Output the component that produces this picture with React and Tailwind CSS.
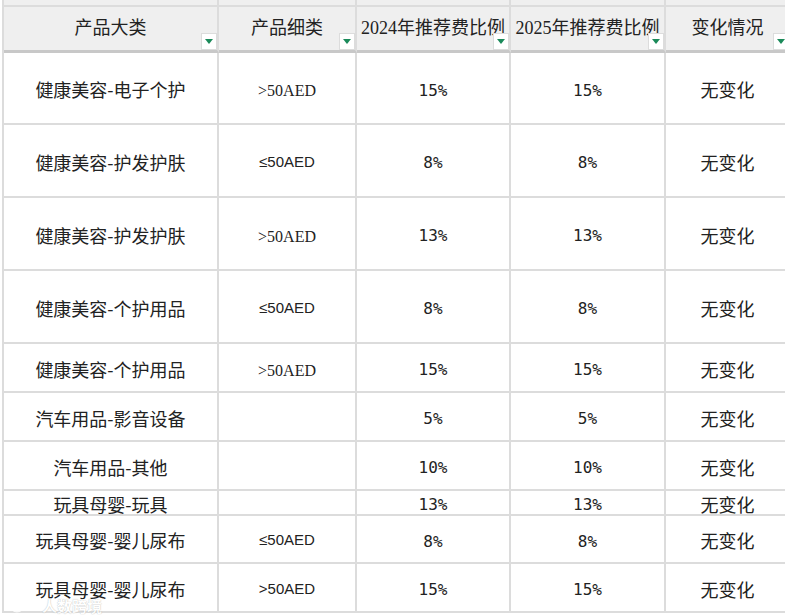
const rows = [
  { cat: "健康美容-电子个护", sub: ">50AED", subFont: "serif", r24: "15%", r25: "15%", h: "h-[72px]" },
  { cat: "健康美容-护发护肤", sub: "≤50AED", subFont: "sans", r24: "8%", r25: "8%", h: "h-[73px]" },
  { cat: "健康美容-护发护肤", sub: ">50AED", subFont: "serif", r24: "13%", r25: "13%", h: "h-[73px]" },
  { cat: "健康美容-个护用品", sub: "≤50AED", subFont: "sans", r24: "8%", r25: "8%", h: "h-[73px]" },
  { cat: "健康美容-个护用品", sub: ">50AED", subFont: "serif", r24: "15%", r25: "15%", h: "h-[49px]" },
  { cat: "汽车用品-影音设备", sub: "", r24: "5%", r25: "5%", h: "h-[49px]" },
  { cat: "汽车用品-其他", sub: "", r24: "10%", r25: "10%", h: "h-[49px]" },
  { cat: "玩具母婴-玩具", sub: "", r24: "13%", r25: "13%", h: "h-[25px]" },
  { cat: "玩具母婴-婴儿尿布", sub: "≤50AED", subFont: "sans", r24: "8%", r25: "8%", h: "h-[48px]" },
  { cat: "玩具母婴-婴儿尿布", sub: ">50AED", subFont: "sans", r24: "15%", r25: "15%", h: "h-[49px]" }
];

const headers = ["产品大类", "产品细类", "2024年推荐费比例", "2025年推荐费比例", "变化情况"];

const cjk = "font-['Noto_Sans_CJK_SC',sans-serif]";
const mono = "font-['DejaVu_Sans_Mono',monospace]";

function FilterButton() {
  return (
    <span className="absolute bottom-0 right-0 flex h-[17px] w-[16px] items-center justify-center border border-[#dcdcdc] bg-white">
      <svg width="8" height="5" viewBox="0 0 8 5">
        <path d="M0 0 L8 0 L4 5 Z" fill="#1b8a5a" />
      </svg>
    </span>
  );
}

function Cell({ children, className = "" }) {
  return (
    <div
      className={`flex items-center justify-center overflow-hidden whitespace-nowrap border-b-2 border-r-2 border-[#dcdcdc] text-[#222] ${className}`}
    >
      {children}
    </div>
  );
}

export default function App() {
  return (
    <div className="relative h-[615px] w-[785px] overflow-hidden bg-white">
      <div className="ml-[2px] grid w-[789px] grid-cols-[215px_138px_154px_155px_125px] border-l-2 border-[#dcdcdc]">
        {headers.map((h) => (
          <div key={"top-" + h} className="h-[7px] border-b-2 border-r-2 border-[#dcdcdc] bg-[#efefef]" />
        ))}

        {headers.map((h) => (
          <div
            key={h}
            className="relative flex h-[46px] items-center justify-center overflow-hidden whitespace-nowrap border-b-[3px] border-r-2 border-[#dcdcdc] border-b-[#c8c8c8] bg-[#efefef] font-['Liberation_Serif','Noto_Sans_CJK_SC',serif] text-[18px] text-[#222]"
          >
            {h}
            <FilterButton />
          </div>
        ))}

        {rows.map((r, i) => (
          <div key={i} className="contents">
            <Cell className={`${r.h} pt-[3px] text-[18px] ${cjk}`}>{r.cat}</Cell>
            <Cell
              className={`${r.h} ${
                r.subFont === "sans"
                  ? "pt-[3px] font-['Liberation_Sans',sans-serif] text-[15px]"
                  : "pt-[6px] font-['Liberation_Serif',serif] text-[16px]"
              }`}
            >
              {r.sub}
            </Cell>
            <Cell className={`${r.h} pt-[5px] text-[16px] ${mono}`}>{r.r24}</Cell>
            <Cell className={`${r.h} pt-[5px] text-[16px] ${mono}`}>{r.r25}</Cell>
            <Cell className={`${r.h} pt-[3px] text-[18px] ${cjk}`}>无变化</Cell>
          </div>
        ))}
      </div>

      {/* faint watermark in the corner */}
      <div className="absolute left-[8px] top-[597px] flex items-center gap-1 opacity-80">
        <svg width="30" height="16" viewBox="0 0 30 16">
          <circle cx="9" cy="8" r="6" fill="none" stroke="#ffffff" strokeWidth="3" />
          <circle cx="19" cy="4" r="3" fill="#ffffff" />
          <circle cx="26" cy="4" r="2" fill="#ffffff" />
        </svg>
        <span className={`text-[15px] font-bold leading-none text-white [text-shadow:0_0_1px_#999] ${cjk}`}>
          人数跨境
        </span>
      </div>
    </div>
  );
}
